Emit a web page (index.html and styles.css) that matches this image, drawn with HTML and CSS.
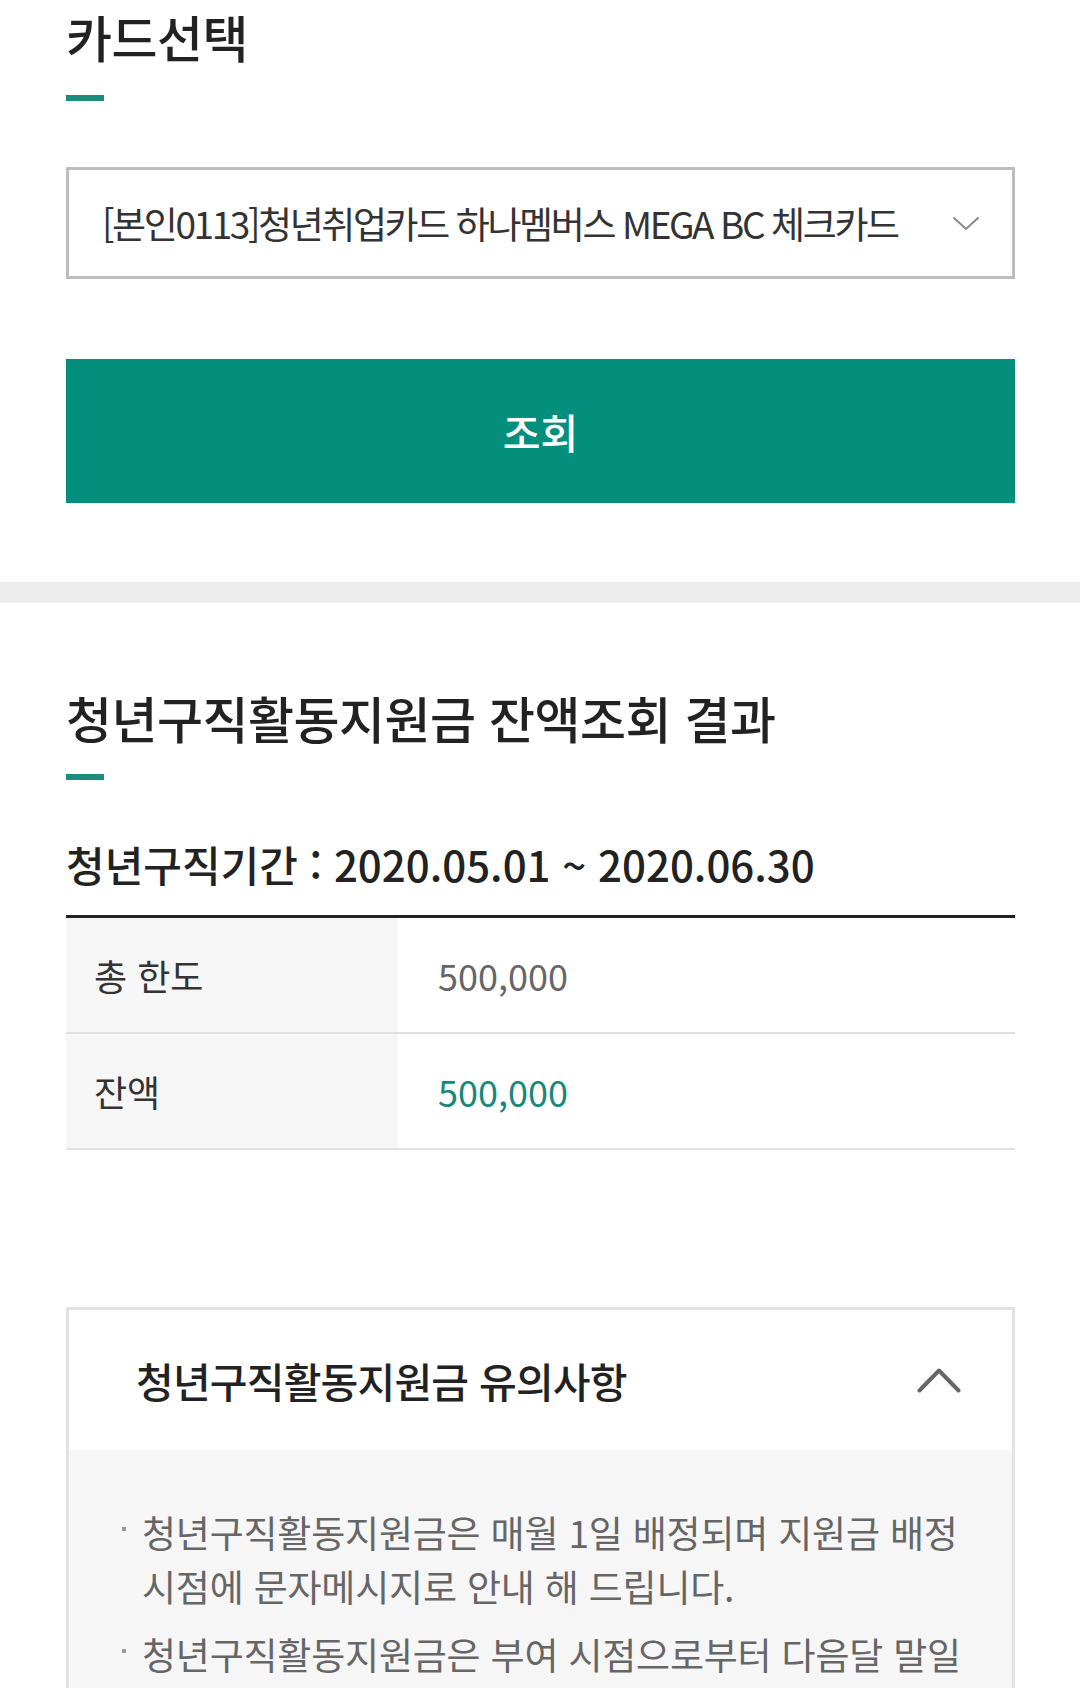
FILE: index.html
```html
<!DOCTYPE html>
<html lang="ko">
<head>
  <meta charset="UTF-8">
  <title>청년구직활동지원금 잔액조회</title>
  <link rel="stylesheet" href="styles.css">
</head>
<body>
  <div class="section select-section">
    <h2 class="page-title">카드선택</h2>
    <div class="title-bar"></div>

    <div class="card-select">
      <span class="card-name">[본인0113]청년취업카드 하나멤버스 MEGA BC 체크카드</span>
      <svg class="select-arrow" width="28" height="15" viewBox="0 0 28 15">
        <polyline points="1.5,1.5 14,13 26.5,1.5" fill="none" stroke="#888" stroke-width="2"/>
      </svg>
    </div>

    <button class="search-btn">조회</button>
  </div>

  <div class="divider"></div>

  <div class="section result-section">
    <h2 class="page-title">청년구직활동지원금 잔액조회 결과</h2>
    <div class="title-bar"></div>

    <div class="period">청년구직기간 : 2020.05.01 ~ 2020.06.30</div>

    <table class="balance-table">
      <tr>
        <th>총 한도</th>
        <td>500,000</td>
      </tr>
      <tr>
        <th>잔액</th>
        <td class="remain">500,000</td>
      </tr>
    </table>

    <div class="notice">
      <div class="notice-head">
        <span class="notice-title">청년구직활동지원금 유의사항</span>
        <svg class="notice-arrow" width="44" height="26" viewBox="0 0 44 26">
          <polyline points="2.5,23.5 22,3.5 41.5,23.5" fill="none" stroke="#666" stroke-width="4" stroke-linecap="round" stroke-linejoin="round"/>
        </svg>
      </div>
      <ul class="notice-body">
        <li><span>청년구직활동지원금은 매월 1일 배정되며 지원금 배정 시점에 문자메시지로 안내 해 드립니다.</span></li>
        <li><span>청년구직활동지원금은 부여 시점으로부터 다음달 말일 까지 사용 가능하며, 기간 경과 시 잔액은 소멸됩니다.</span></li>
        <li><span>잔액은 승인 기준으로 조회되며 실제 청구 금액과 차이가 있을 수 있습니다.</span></li>
      </ul>
    </div>
  </div>
</body>
</html>
```

FILE: styles.css
```css
body {
  margin: 0;
  background: #fff;
  color: #222;
  font-family: "Noto Sans CJK KR", "Noto Sans", sans-serif;
}

.section { padding: 0 65px 0 66px; }
.select-section { padding-top: 4px; padding-bottom: 79px; }
.result-section { padding-top: 82px; padding-bottom: 200px; }

.page-title {
  margin: 0;
  font-size: 50px;
  font-weight: 500;
  line-height: 64px;
  letter-spacing: -0.5px;
  color: #222;
}
.title-bar {
  width: 38px;
  height: 6px;
  margin-top: 27px;
  background: #1e8c7c;
}
.result-section .title-bar { margin-top: 25px; }

.card-select {
  display: flex;
  align-items: center;
  justify-content: space-between;
  height: 106px;
  margin-top: 66px;
  padding: 0 32px 0 33px;
  border: 3px solid #bdbdbd;
}
.card-name {
  font-size: 37px;
  color: #333;
  letter-spacing: -2.4px;
}

.search-btn {
  display: block;
  width: 100%;
  height: 144px;
  margin-top: 80px;
  border: 0;
  background: #048f7c;
  color: #fff;
  font-family: inherit;
  font-size: 41px;
  font-weight: 500;
}

.divider { height: 21px; background: #ececec; }

.period {
  margin-top: 56px;
  font-size: 42px;
  font-weight: 500;
  line-height: 56px;
  color: #222;
}

.balance-table {
  width: 100%;
  margin-top: 23px;
  border-collapse: collapse;
  border-top: 3px solid #222;
}
.balance-table th,
.balance-table td {
  height: 114px;
  padding: 0;
  border-bottom: 2px solid #e0e0e0;
  font-size: 36px;
  font-weight: 400;
  text-align: left;
}
.balance-table th {
  width: 304px;
  padding-left: 28px;
  background: #f6f6f6;
  color: #333;
}
.balance-table td { padding-left: 40px; color: #666; }
.balance-table td.remain { color: #17887a; }

.notice {
  margin-top: 157px;
  border: 3px solid #e2e2e2;
}
.notice-head {
  display: flex;
  align-items: center;
  justify-content: space-between;
  height: 140px;
  padding: 0 51px 0 67px;
}
.notice-title {
  font-size: 41px;
  font-weight: 500;
  letter-spacing: -0.8px;
  color: #222;
}
.notice-body {
  margin: 0;
  padding: 55px 50px 40px 53px;
  list-style: none;
  background: #f6f6f6;
}
.notice-body li {
  display: flex;
  font-size: 37px;
  line-height: 54px;
  color: #666;
  word-break: keep-all;
  letter-spacing: -0.2px;
}
.notice-body li + li { margin-top: 14px; }
.notice-body li::before {
  content: "";
  flex: none;
  width: 4px;
  height: 4px;
  margin: 22px 16px 0 0;
  background: #999;
}
```
